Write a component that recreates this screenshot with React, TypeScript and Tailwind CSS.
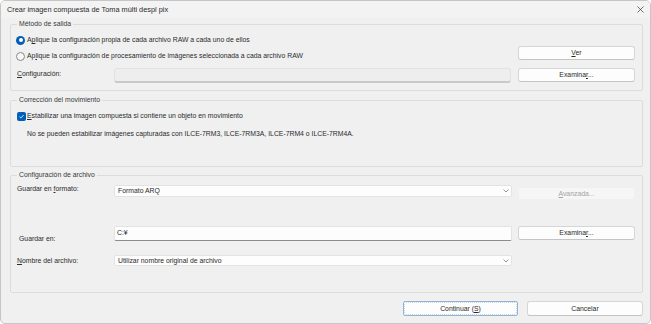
import React from 'react';

const Chevron = () => (
  <svg width="6" height="4" viewBox="0 0 6 4" className="shrink-0">
    <path d="M0.5 0.5 L3 3 L5.5 0.5" fill="none" stroke="#7a7a7a" strokeWidth="0.8" />
  </svg>
);

function Button({ children, className = '' }: { children: React.ReactNode; className?: string }) {
  return (
    <div
      className={`flex items-center justify-center bg-[#fdfdfd] border border-[#d6d6d6] border-b-[#c4c4c4] rounded-[3px] ${className}`}
    >
      {children}
    </div>
  );
}

function Select({ value, className = '' }: { value: string; className?: string }) {
  return (
    <div
      className={`flex-1 flex items-center justify-between pl-[3px] pr-[2px] bg-[#fdfdfd] border border-[#e3e3e3] rounded-[2px] ${className}`}
    >
      <span>{value}</span>
      <Chevron />
    </div>
  );
}

export default function App() {
  return (
    <div className="w-[651px] h-[324px] flex flex-col bg-[#f0f0f0] border border-[#c6c6c6] rounded-[5px] overflow-hidden font-['Liberation_Sans',Arial,sans-serif] text-[6.85px] leading-[10px] text-[#2a2a2a]">
      {/* title bar */}
      <div className="h-[17px] shrink-0 flex items-center justify-between pl-[6px] pr-[6px] bg-[#f3f3f3]">
        <span className="text-[7.35px]">Crear imagen compuesta de Toma múlti despl pix</span>
        <svg width="7" height="7" viewBox="0 0 7 7">
          <path d="M0.5 0.5 L6.5 6.5 M6.5 0.5 L0.5 6.5" stroke="#333" strokeWidth="0.7" />
        </svg>
      </div>

      <div className="flex flex-col pl-[9px] pr-[7px]">
        {/* Método de salida */}
        <fieldset className="mt-[1px] border border-[#dcdcdc] rounded-[2px] pl-[6px] pr-[7px] pb-[7px]">
          <legend className="px-[2px] leading-[10px] text-[#3a3a3a]">Método de salida</legend>
          <div className="flex">
            <div className="flex-1 flex flex-col pt-[5px]">
              <div className="h-[12px] flex items-center gap-[2px] -ml-[1px]">
                <span className="w-[9px] h-[9px] rounded-full bg-[#005fb8] flex items-center justify-center">
                  <span className="w-[4px] h-[4px] rounded-full bg-white" />
                </span>
                <span>
                  A<u className="decoration-[0.5px]">p</u>lique la configuración propia de cada archivo RAW a cada uno de ellos
                </span>
              </div>
              <div className="mt-[4px] h-[12px] flex items-center gap-[2px] -ml-[1px]">
                <span className="w-[9px] h-[9px] rounded-full border border-[#8a8a8a] bg-[#f7f7f7]" />
                <span>
                  Ap<u className="decoration-[0.5px]">l</u>ique la configuración de procesamiento de imágenes seleccionada a cada archivo RAW
                </span>
              </div>
              <div className="mt-[6px] h-[15px] flex items-center">
                <span className="w-[97px] shrink-0 -mt-[4px]">
                  <u className="decoration-[0.5px]">C</u>onfiguración:
                </span>
                <div className="flex-1 h-[15px] bg-[#eeeeee] border border-[#e2e2e2] border-b-2 border-b-[#c9c9c9] rounded-[3px]" />
              </div>
            </div>
            <div className="w-[117px] ml-[7px] flex flex-col pt-[17px]">
              <Button className="h-[14px]">
                <span>
                  <u className="decoration-[0.5px]">V</u>er
                </span>
              </Button>
              <Button className="h-[14px] mt-[8px]">
                <span>
                  Examina<u className="decoration-[0.5px]">r</u>...
                </span>
              </Button>
            </div>
          </div>
        </fieldset>

        {/* Corrección del movimiento */}
        <fieldset className="mt-[4px] border border-[#dcdcdc] rounded-[2px] pl-[6px] pr-[7px] pb-[26px]">
          <legend className="px-[2px] leading-[10px] text-[#3a3a3a]">Corrección del movimiento</legend>
          <div className="pt-[5px] h-[17px] flex items-end">
            <div className="h-[12px] flex items-center gap-[1px]">
              <span className="w-[9px] h-[9px] rounded-[2px] bg-[#005fb8] flex items-center justify-center">
                <svg width="7" height="7" viewBox="0 0 7 7">
                  <path d="M1.5 3.7 L2.9 5 L5.6 2" fill="none" stroke="white" strokeWidth="0.8" />
                </svg>
              </span>
              <span>
                <u className="decoration-[0.5px]">E</u>stabilizar una imagen compuesta si contiene un objeto en movimiento
              </span>
            </div>
          </div>
          <div className="mt-[6px] h-[12px] flex items-center pl-[10px]">
            No se pueden estabilizar imágenes capturadas con ILCE-7RM3, ILCE-7RM3A, ILCE-7RM4 o ILCE-7RM4A.
          </div>
        </fieldset>

        {/* Configuración de archivo */}
        <fieldset className="mt-[3px] border border-[#dcdcdc] rounded-[2px] pl-[6px] pr-[7px] pt-[5px] pb-[26px]">
          <legend className="px-[2px] leading-[10px] text-[#3a3a3a]">Configuración de archivo</legend>
          <div className="flex items-start">
            <span className="w-[97px] shrink-0 leading-[8px]">
              Guardar en <u className="decoration-[0.5px]">f</u>ormato:
            </span>
            <Select value="Formato ARQ" className="h-[12px]" />
            <div className="w-[117px] ml-[6px] mt-[2px] h-[13px] flex items-center justify-center bg-[#f6f6f6] border border-[#f0f0f0] rounded-[3px] text-[#a3a3a3]">
              <span>
                <u className="decoration-[0.5px]">A</u>vanzada...
              </span>
            </div>
          </div>
          <div className="mt-[26px] flex items-start">
            <span className="w-[97px] shrink-0 pl-[2px] mt-[8px]">Guardar en:</span>
            <div className="flex-1 h-[15px] pl-[2px] pt-[1px] bg-[#fdfdfd] border border-[#e3e3e3] border-b-[#8c8c8c] rounded-[2px]">
              C:¥
            </div>
            <Button className="w-[117px] ml-[6px] h-[14px]">
              <span>
                Examina<u className="decoration-[0.5px]">r</u>...
              </span>
            </Button>
          </div>
          <div className="mt-[11px] flex items-center">
            <span className="w-[97px] shrink-0">
              <u className="decoration-[0.5px]">N</u>ombre del archivo:
            </span>
            <Select value="Utilizar nombre original de archivo" className="h-[11px]" />
            <div className="w-[117px] ml-[6px]" />
          </div>
        </fieldset>

        {/* bottom buttons */}
        <div className="mt-[8px] flex justify-end gap-[9px]">
          <div className="w-[115px] h-[15px] flex items-center justify-center bg-[#fdfdfd] border border-[#8fb4dc] rounded-[2px] outline outline-1 outline-dotted outline-[#d4d4d4] -outline-offset-[2px]">
            <span>
              Continuar (<u className="decoration-[0.5px]">S</u>)
            </span>
          </div>
          <Button className="w-[116px] h-[15px]">
            <span>Cancelar</span>
          </Button>
        </div>
      </div>
    </div>
  );
}
